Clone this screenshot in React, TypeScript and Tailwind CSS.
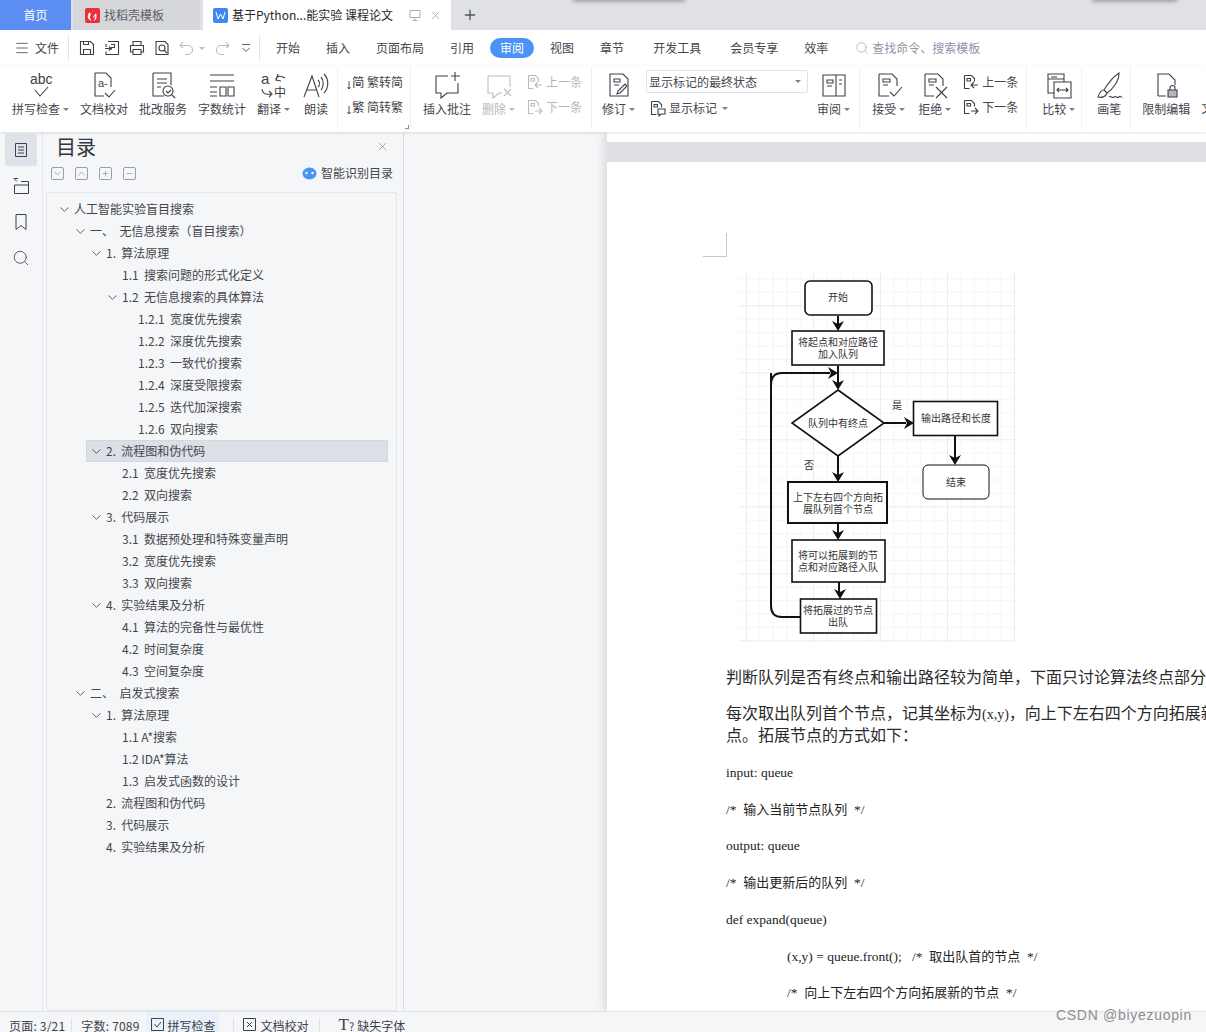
import type { ReactNode } from "react";
import { ChevronDown, ChevronUp, Menu, Minus, Plus, Search, X } from "lucide-react";

const cjk = "font-['Noto_Sans_CJK_SC','Noto_Sans',sans-serif]";

function Caret({ muted }: { muted?: boolean }) {
  return (
    <span
      className={`ml-[3px] inline-block h-0 w-0 border-x-[3px] border-t-[3px] border-x-transparent ${
        muted ? "border-t-[#b9bcc4]" : "border-t-[#7b7f88]"
      }`}
    />
  );
}

function Ico({ children, w = 30, muted }: { children: ReactNode; w?: number; muted?: boolean }) {
  return (
    <svg
      width={w}
      height={30}
      viewBox={`0 0 ${w} 30`}
      fill="none"
      stroke={muted ? "#b9bcc4" : "#3d4149"}
      strokeWidth="1.1"
      className="shrink-0"
    >
      {children}
    </svg>
  );
}

function Small({ children, muted }: { children: ReactNode; muted?: boolean }) {
  return (
    <svg
      width="18"
      height="18"
      viewBox="0 0 18 18"
      fill="none"
      stroke={muted ? "#b9bcc4" : "#3d4149"}
      strokeWidth="1.1"
      className="shrink-0"
    >
      {children}
    </svg>
  );
}

function Big({
  label,
  icon,
  caret,
  muted,
  className = "",
}: {
  label: string;
  icon: ReactNode;
  caret?: boolean;
  muted?: boolean;
  className?: string;
}) {
  return (
    <div className={`flex shrink-0 flex-col items-center ${className}`}>
      <div className="flex h-[35px] items-center">{icon}</div>
      <div className={`-mt-[2px] flex h-[18px] items-center whitespace-nowrap text-xs ${muted ? "text-[#b4b7bf]" : ""}`}>
        {label}
        {caret && <Caret muted={muted} />}
      </div>
    </div>
  );
}

function MiniRow({ icon, label, muted }: { icon: ReactNode; label: string; muted?: boolean }) {
  return (
    <div className={`flex h-[24px] items-center gap-[2px] whitespace-nowrap text-xs ${muted ? "text-[#b4b7bf]" : ""}`}>
      {icon}
      {label}
    </div>
  );
}

const Sep = ({ className = "" }: { className?: string }) => (
  <div className={`h-[62px] w-px shrink-0 self-start bg-[#eef0f3] ${className}`} />
);

const docMini = (
  <>
    <path d="M2.500 2.500h7l3 3v3M2.500 2.500v13h5" />
    <path d="M5 5.500h3.500v2.500H5z" />
  </>
);

function PrevIcon({ muted }: { muted?: boolean }) {
  return (
    <Small muted={muted}>
      {docMini}
      <path d="M16 12H9m3-3-3 3 3 3" />
    </Small>
  );
}

function NextIcon({ muted }: { muted?: boolean }) {
  return (
    <Small muted={muted}>
      {docMini}
      <path d="M9 13h7m-3-3 3 3-3 3" />
    </Small>
  );
}

function ConvertIcon({ ch }: { ch: string }) {
  return (
    <Small>
      <text x="5" y="13.500" fontSize="12.500" fill="#3d4149" stroke="none" fontFamily="Noto Sans CJK SC">
        {ch}
      </text>
      <path d="M2 8v8M0.500 14 2 16l1.500-2" strokeWidth="0.9" />
    </Small>
  );
}

function Ribbon() {
  return (
    <div className="relative z-10 flex h-[66px] shrink-0 items-start bg-white pl-[12px] pt-[1px] text-[#43464d] shadow-[0_1px_3px_rgba(0,0,0,0.12)]">
      <div className="flex gap-[11px]">
        <Big
          label="拼写检查"
          caret
          icon={
            <Ico>
              <text x="4" y="14" fontSize="14" fill="#3d4149" stroke="none" fontFamily="Liberation Sans">
                abc
              </text>
              <path d="m9 20 5 6 8-9" />
            </Ico>
          }
        />
        <Big
          label="文档校对"
          icon={
            <Ico>
              <path d="M6 3h11l5 5v9M6 3v23h9" />
              <text x="9" y="17" fontSize="11" fill="#3d4149" stroke="none" fontFamily="Liberation Sans">
                a-
              </text>
              <path d="m16 23 4 4 6-7" />
            </Ico>
          }
        />
        <Big
          label="批改服务"
          icon={
            <Ico>
              <path d="M5 3h18v12M5 3v23h11" />
              <path d="M9 9h10M9 13h10M9 17h4" />
              <circle cx="20" cy="21" r="5" />
              <path d="m18 21 2 2 3-3M24 25l3 3" />
            </Ico>
          }
        />
        <Big
          label="字数统计"
          icon={
            <Ico>
              <path d="M3 5h24M3 11h24" />
              <path d="M3 17h7M3 22h7M3 26h7" />
              <path d="M13 17h6v9h-6zM21 17h6v9h-6z" />
            </Ico>
          }
        />
        <Big
          label="翻译"
          caret
          className="w-[33px]"
          icon={
            <Ico>
              <text x="2" y="14" fontSize="15" fill="#3d4149" stroke="none" fontFamily="Liberation Sans">
                a
              </text>
              <text x="15" y="27" fontSize="12" fill="#3d4149" stroke="none" fontFamily="Noto Sans CJK SC">
                中
              </text>
              <path d="M17 10c0-4 4-5 9-2m-7-4-2 6 5 1" />
              <path d="M3 19c0 4 3 6 9 5m-2-3 3 3-3 3" />
            </Ico>
          }
        />
        <Big
          label="朗读"
          icon={
            <Ico>
              <path d="m3 27 8-21 7 21M6 20h10" />
              <path d="M17 10c2 2 2 5 0 7M20 7c3 3 3 10 0 13M23 4c5 5 5 14 0 19" />
            </Ico>
          }
        />
      </div>
      <Sep className="ml-[6px]" />
      <div className="ml-[9px] w-[58px] shrink-0 pt-[3px]">
        <MiniRow label="繁转简" icon={<ConvertIcon ch="简" />} />
        <div className="h-[1px]" />
        <MiniRow label="简转繁" icon={<ConvertIcon ch="繁" />} />
      </div>
      <div className="relative h-[62px] w-[3px] shrink-0">
        <div className="absolute bottom-0 left-0 h-[4px] w-[4px] border-b border-r border-[#8a8fa0]" />
      </div>
      <Sep className="ml-[2px]" />
      <Big
        label="插入批注"
        className="ml-[12px]"
        icon={
          <Ico>
            <path d="M16 6H4v17h5v5l6-5h11V13" />
            <path d="M23 2v9M19 6h9" />
          </Ico>
        }
      />
      <Big
        label="删除"
        caret
        muted
        className="ml-[11px]"
        icon={
          <Ico muted>
            <path d="M4 6h22v11M4 6v17h5v5l6-5h3" />
            <path d="m20 19 7 7m0-7-7 7" />
          </Ico>
        }
      />
      <div className="ml-[11px] w-[56px] shrink-0 pt-[3px]">
        <MiniRow muted label="上一条" icon={<PrevIcon muted />} />
        <div className="h-[1px]" />
        <MiniRow muted label="下一条" icon={<NextIcon muted />} />
      </div>
      <Sep className="ml-[9px]" />
      <Big
        label="修订"
        caret
        className="ml-[10px]"
        icon={
          <Ico>
            <path d="M6 4h13l5 5v17H6z" />
            <path d="M10 9h6v3h-6zM10 15h5" />
            <path d="m13 24 1-3 7-7 2 2-7 7z" />
          </Ico>
        }
      />
      <div className="ml-[11px] w-[162px] shrink-0 pt-[3px]">
        <div className="flex h-[23px] items-center justify-between rounded-[2px] border border-[#dfe1e6] pl-[2px] pr-[6px] text-xs">
          显示标记的最终状态
          <Caret />
        </div>
        <div className="mt-[3px] flex h-[24px] items-center gap-[2px] pl-[3px] text-xs">
          <Small>
            {docMini}
            <path d="M9 10h7v5h-4l-2 2v-2H9z" />
          </Small>
          显示标记
          <Caret />
        </div>
      </div>
      <Big
        label="审阅"
        caret
        className="ml-[9px]"
        icon={
          <Ico>
            <path d="M4 5h22v21H4zM17 5v21" />
            <path d="M8 10h6v3H8zM8 16h5M20 10h3M20 14h3" />
          </Ico>
        }
      />
      <Sep className="ml-[9px]" />
      <Big
        label="接受"
        caret
        className="ml-[12px]"
        icon={
          <Ico>
            <path d="M5 4h13l5 5v7M5 4v22h10" />
            <path d="M9 9h7v3H9zM9 15h5" />
            <path d="m16 22 4 4 8-9" />
          </Ico>
        }
      />
      <Big
        label="拒绝"
        caret
        className="ml-[13px]"
        icon={
          <Ico>
            <path d="M5 4h13l5 5v7M5 4v22h9" />
            <path d="M9 9h7v3H9zM9 15h5" />
            <path d="m16 17 11 11m0-11L16 28" />
          </Ico>
        }
      />
      <div className="ml-[11px] w-[56px] shrink-0 pt-[3px]">
        <MiniRow label="上一条" icon={<PrevIcon />} />
        <div className="h-[1px]" />
        <MiniRow label="下一条" icon={<NextIcon />} />
      </div>
      <Sep className="ml-[8px]" />
      <Big
        label="比较"
        caret
        className="ml-[15px]"
        icon={
          <Ico>
            <path d="M4 4h16v5H4zM4 4v19h6M20 9v3" />
            <path d="M10 12h17v16H10z" />
            <path d="M7 7h6M13 20h11m-9-2-2 2 2 2m7-4 2 2-2 2" />
          </Ico>
        }
      />
      <Sep className="ml-[6px]" />
      <Big
        label="画笔"
        className="ml-[12px]"
        icon={
          <Ico>
            <path d="M25 3c-6 4-12 12-15 17l3 3c6-4 12-12 12-20z" />
            <path d="M10 20c-4 0-5 4-6 7 3 1 8 0 9-4" />
            <path d="M15 27c2-2 3 2 5 0s3 2 5 0 2 1 3 0" />
          </Ico>
        }
      />
      <Sep className="ml-[6px]" />
      <Big
        label="限制编辑"
        className="ml-[11px]"
        icon={
          <Ico>
            <path d="M7 26V4h11l6 6v5M7 26h8" />
            <path d="M17 20h9v7h-9z" fill="#b5b8c0" stroke="#3d4149" />
            <path d="M19 20v-2a2.500 2.500 0 0 1 5 0v2" />
          </Ico>
        }
      />
      <div className="ml-[11px] mt-[33px] text-xs">文</div>
    </div>
  );
}

function Tabs() {
  return (
    <div className="relative flex h-[30px] shrink-0 bg-[#e0e1e5]">
      <div className="flex w-[71px] items-center justify-center bg-[#5c8df2] pb-[1px] text-xs text-white">首页</div>
      <div className="ml-[2px] flex w-[127px] items-center gap-[4px] bg-[#d6d7db] pl-[12px] text-xs text-[#5d6068]">
        <span className="flex h-[15px] w-[15px] items-center justify-center rounded-[2px] bg-[#ee2d3b]">
          <svg width="11" height="12" viewBox="0 0 11 12" fill="#fff">
            <path d="M6 0c1 3-3 5-3 8 0 2 1 3 2 4-3-1-5-3-4-6 0-1 1-2 2-3 0 1 0 2 1 2 1-1 2-3 2-5zM9 4c1 3 1 6-2 8 0-2 2-3 1-5-1 1-1 2-2 2 0-2 2-3 3-5z" />
          </svg>
        </span>
        找稻壳模板
      </div>
      <div className="ml-[3px] flex w-[248px] items-center bg-white pl-[10px] text-xs text-[#26282d]">
        <span className="mr-[4px] flex h-[15px] w-[15px] items-center justify-center rounded-[2px] bg-[#3f88f2]">
          <svg width="11" height="9" viewBox="0 0 11 9" fill="none" stroke="#fff" strokeWidth="1">
            <path d="m1 1 2 7 2.500-5 2.500 5 2-7" />
          </svg>
        </span>
        <span className="whitespace-nowrap">基于Python...能实验 课程论文</span>
        <svg width="14" height="14" viewBox="0 0 14 14" fill="none" stroke="#a9adb6" className="ml-[15px]">
          <path d="M2 2.500h10v7H2zM7 9.500v2.500M4.500 12.500h5" />
        </svg>
        <X size={13} strokeWidth={1.2} className="ml-[7px] text-[#8d919a]" />
      </div>
      <Plus size={16} strokeWidth={2} className="ml-[11px] self-center text-[#4f5562]" />
      {/* dark bleed along the top edge of the capture */}
      <div className="absolute left-[573px] top-[-2px] h-[3px] w-[112px] bg-[#777] blur-[2px]" />
      <div className="absolute left-[1092px] top-[-2px] h-[3px] w-[85px] bg-[#777] blur-[2px]" />
    </div>
  );
}

function MenuBar() {
  return (
    <div className="flex h-[36px] shrink-0 items-center bg-white text-xs text-[#43464d]">
      <Menu size={16} strokeWidth={1.2} className="ml-[14px] text-[#3d4149]" />
      <span className="ml-[5px]">文件</span>
      <div className="ml-[9px] h-[26px] w-px bg-[#e3e5e9]" />
      <div className="ml-[9px] flex items-center gap-[7px]">
        <Small>
          <path d="M2.500 2.500h10l3 3v10h-13zM5.500 15.500v-5h7v5M5.500 2.500v3h5v-3" />
        </Small>
        <Small>
          <path d="M5 2.500h10.500v13H3v-3M3 8V5" />
          <path d="M8 5.500h3.500v3H8.500v2M2 9.500h6M6 7.500l2 2-2 2" />
        </Small>
        <Small>
          <path d="M5 6V2.500h8V6M5 13H2.500V6.500h13V13H13M5 10.500h8v5H5z" />
        </Small>
        <Small>
          <path d="M3 2.500h9l3 3v10H3z" />
          <circle cx="9" cy="9" r="3" />
          <path d="m11 11 3 3" />
        </Small>
      </div>
      <div className="ml-[7px] flex items-center">
        <Small muted>
          <path d="M5 3 2 6.500 5 9M2 6.500h8a4.500 4.500 0 0 1 0 9H7" />
        </Small>
        <Caret muted />
        <span className="ml-[8px]">
          <Small muted>
            <path d="M13 3l3 3.500L13 9M16 6.500H8a4.500 4.500 0 0 0 0 9h3" />
          </Small>
        </span>
        <span className="ml-[9px]">
          <svg width="12" height="12" viewBox="0 0 12 12" fill="none" stroke="#5d6068">
            <path d="M2 2.500h8M2.500 6 6 9.500 9.500 6" />
          </svg>
        </span>
      </div>
      <div className="ml-[7px] h-[26px] w-px bg-[#e3e5e9]" />
      <div className="ml-[16px] flex items-center gap-[26px] whitespace-nowrap">
        <span>开始</span>
        <span>插入</span>
        <span>页面布局</span>
        <span>引用</span>
        <span className="-mx-[10px] rounded-full bg-[#4c94f4] px-[10px] py-[2px] leading-[16px] text-white">审阅</span>
        <span>视图</span>
        <span>章节</span>
        <span className="ml-[3px]">开发工具</span>
        <span className="ml-[3px]">会员专享</span>
        <span>效率</span>
      </div>
      <Search size={14} strokeWidth={1.3} className="ml-[27px] text-[#a7acb8]" />
      <span className="ml-[3px] whitespace-nowrap text-[#8d94a6]">查找命令、搜索模板</span>
    </div>
  );
}

type Node = { t: string; l: 0 | 1 | 2 | 3 | 4; c?: boolean; hl?: boolean };

const toc: Node[] = [
  { t: "人工智能实验盲目搜索", l: 0, c: true },
  { t: "一、  无信息搜索（盲目搜索）", l: 1, c: true },
  { t: "1.  算法原理", l: 2, c: true },
  { t: "1.1  搜索问题的形式化定义", l: 3 },
  { t: "1.2  无信息搜索的具体算法", l: 3, c: true },
  { t: "1.2.1  宽度优先搜索", l: 4 },
  { t: "1.2.2  深度优先搜索", l: 4 },
  { t: "1.2.3  一致代价搜索", l: 4 },
  { t: "1.2.4  深度受限搜索", l: 4 },
  { t: "1.2.5  迭代加深搜索", l: 4 },
  { t: "1.2.6  双向搜索", l: 4 },
  { t: "2.  流程图和伪代码", l: 2, c: true, hl: true },
  { t: "2.1  宽度优先搜索", l: 3 },
  { t: "2.2  双向搜索", l: 3 },
  { t: "3.  代码展示", l: 2, c: true },
  { t: "3.1  数据预处理和特殊变量声明", l: 3 },
  { t: "3.2  宽度优先搜索", l: 3 },
  { t: "3.3  双向搜索", l: 3 },
  { t: "4.  实验结果及分析", l: 2, c: true },
  { t: "4.1  算法的完备性与最优性", l: 3 },
  { t: "4.2  时间复杂度", l: 3 },
  { t: "4.3  空间复杂度", l: 3 },
  { t: "二、  启发式搜索", l: 1, c: true },
  { t: "1.  算法原理", l: 2, c: true },
  { t: "1.1 A*搜索", l: 3 },
  { t: "1.2 IDA*算法", l: 3 },
  { t: "1.3  启发式函数的设计", l: 3 },
  { t: "2.  流程图和伪代码", l: 2 },
  { t: "3.  代码展示", l: 2 },
  { t: "4.  实验结果及分析", l: 2 },
];

const indent = ["ml-[7px]", "ml-[23px]", "ml-[39px]", "ml-[55px]", "ml-[71px]"];

function TocBtn({ children }: { children: ReactNode }) {
  return (
    <span className="flex h-[13px] w-[13px] items-center justify-center rounded-[2px] border border-[#9a9ea8] text-[#60646c]">
      {children}
    </span>
  );
}

function Sidebar() {
  return (
    <div className="flex w-[404px] shrink-0 border-r border-[#dcdee3] bg-[#f5f6f8]">
      <div className="flex w-[43px] shrink-0 flex-col items-center border-r border-[#e4e6ea] pt-[2px] text-[#4a4e57]">
        <div className="flex h-[32px] w-[32px] items-center justify-center rounded-[2px] bg-[#dfe2e9]">
          <svg width="16" height="16" viewBox="0 0 16 16" fill="none" stroke="#3d4149">
            <path d="M2.500 1.500h11v13h-11zM5 5h6M5 8h6M5 11h6" />
          </svg>
        </div>
        <svg width="18" height="18" viewBox="0 0 18 18" fill="none" stroke="#3d4149" className="mt-[11px]">
          <path d="M2 1.500h4M2 1.500l3 3M9 4.500h7.500v12h-14V8M2.500 8h14" />
        </svg>
        <svg width="18" height="18" viewBox="0 0 18 18" fill="none" stroke="#3d4149" className="mt-[18px]">
          <path d="M4 1.500h10v15l-5-4-5 4z" />
        </svg>
        <Search size={18} strokeWidth={1.2} className="mt-[18px]" />
      </div>
      <div className="flex min-w-0 flex-1 flex-col pl-[3px] pr-[6px]">
        <div className="flex items-start justify-between pl-[10px] pr-[8px] pt-[3px]">
          <span className="text-[20px] leading-[24px] text-[#33363c]">目录</span>
          <X size={13} strokeWidth={1} className="mt-[5px] text-[#60646c]" />
        </div>
        <div className="mt-[4px] flex h-[20px] items-center pl-[5px] pr-[4px]">
          <div className="flex gap-[11px]">
            <TocBtn>
              <ChevronDown size={11} strokeWidth={1.2} />
            </TocBtn>
            <TocBtn>
              <ChevronUp size={11} strokeWidth={1.2} />
            </TocBtn>
            <TocBtn>
              <Plus size={9} strokeWidth={1.2} />
            </TocBtn>
            <TocBtn>
              <Minus size={9} strokeWidth={1.2} />
            </TocBtn>
          </div>
          <div className="ml-auto flex items-center gap-[4px] text-xs text-[#43464d]">
            <svg width="15" height="13" viewBox="0 0 15 13">
              <ellipse cx="7.500" cy="6.500" rx="7" ry="6" fill="#4c94f4" />
              <circle cx="4.500" cy="6" r="1.200" fill="#fff" />
              <circle cx="10.500" cy="6" r="1.200" fill="#fff" />
            </svg>
            智能识别目录
          </div>
        </div>
        <div className="mt-[9px] flex-1 overflow-hidden rounded-[2px] border border-[#e4e6ea] pt-[5px] text-xs text-[#43464d]">
          {toc.map((n, i) => (
            <div
              key={i}
              className={`flex h-[22px] items-center whitespace-pre ${indent[n.l]} mr-[8px] ${
                n.hl ? "bg-[#dbdfe6] shadow-[inset_0_0_0_1px_#d3d7df]" : ""
              }`}
            >
              <span className="flex w-[20px] shrink-0 justify-center">
                {n.c && <ChevronDown size={15} strokeWidth={1.3} className="text-[#3d4149]" />}
              </span>
              {n.t}
            </div>
          ))}
        </div>
      </div>
    </div>
  );
}

function Flow() {
  const v = Array.from({ length: 21 }, (_, i) => 746.5 + i * 13.4);
  const h = Array.from({ length: 28 }, (_, i) => 279 + i * 13.4);
  const txt = (x: number, y: number, s: string) => (
    <text x={x} y={y} fontSize="10" textAnchor="middle" fill="#333" stroke="none" fontFamily="Noto Sans CJK SC">
      {s}
    </text>
  );
  return (
    <svg width="277" height="372" viewBox="739 271 277 372" fill="none" className="block">
      {v.map((x, i) => (
        <path key={i} d={`M${x} 271V642`} stroke={i % 5 === 0 ? "#ebebeb" : "#f5f5f5"} />
      ))}
      {h.map((y, i) => (
        <path key={i} d={`M739 ${y}H1015`} stroke={i % 5 === 2 ? "#ebebeb" : "#f5f5f5"} />
      ))}
      <g stroke="#111" strokeWidth="1.600" fill="#fff">
        <rect x="805" y="281" width="67" height="34" rx="5" />
        <rect x="792" y="331" width="92" height="34" />
        <path d="M838 390 884 423 838 456 792 423Z" />
        <rect x="913.500" y="401.500" width="84" height="34" />
        <rect x="923" y="465" width="66" height="34" rx="5" strokeWidth="1" />
        <rect x="788" y="482" width="99" height="41" strokeWidth="2" />
        <rect x="792" y="540" width="93" height="42" />
        <rect x="800.500" y="599" width="76" height="34" />
      </g>
      <g stroke="#111" strokeWidth="2">
        <path d="M838 316V326M838 366V385M771 373V606Q771 617 782 617H800M771 385Q771 373 782 373H830" />
        <path d="M884 423H906M955 436V458M838 456V476M838 524V534M839 582V593" />
      </g>
      <g fill="#111">
        <path d="M838 331 832 321 838 324 844 321ZM838 390 832 380 838 383 844 380ZM838 373 828 367 831 373 828 379Z" />
        <path d="M914 423 904 417 907 423 904 429ZM955 465 949 455 955 458 961 455ZM838 482 832 472 838 475 844 472Z" />
        <path d="M838 540 832 530 838 533 844 530ZM840 599 834 589 840 592 846 589Z" />
      </g>
      {txt(838, 301, "开始")}
      {txt(838, 346, "将起点和对应路径")}
      {txt(838, 358, "加入队列")}
      {txt(838, 427, "队列中有终点")}
      {txt(956, 422, "输出路径和长度")}
      {txt(956, 486, "结束")}
      {txt(897, 409, "是")}
      {txt(809, 469, "否")}
      {txt(838, 501, "上下左右四个方向拓")}
      {txt(838, 513, "展队列首个节点")}
      {txt(838, 559, "将可以拓展到的节")}
      {txt(838, 571, "点和对应路径入队")}
      {txt(838, 614, "将拓展过的节点")}
      {txt(838, 626, "出队")}
    </svg>
  );
}

function Code({ children, indented, nudge }: { children: ReactNode; indented?: boolean; nudge?: "a" | "b" }) {
  return (
    <div
      className={`h-[36.600px] whitespace-pre font-['Liberation_Serif','Noto_Sans_CJK_SC',serif] text-[13.500px] leading-[20px] text-[#222] ${
        indented ? "pl-[61px]" : ""
      } ${nudge === "a" ? "pt-[1px]" : nudge === "b" ? "pt-[2px]" : ""}`}
    >
      {children}
    </div>
  );
}

const Zh = ({ children }: { children: string }) => <span className={`${cjk} text-[13px]`}>{children}</span>;

function Page() {
  return (
    <div className="flex min-w-0 flex-1 overflow-hidden bg-[#f5f6f8] pl-[203px]">
      <div className="relative flex-1 bg-white shadow-[-4px_0_8px_rgba(0,0,0,0.1)]">
        <div className="h-[10px] bg-white" />
        <div className="h-[20px] bg-[#dedfe2]" />
        <div className="absolute left-[96px] top-[101px] h-[24px] w-[24px] border-b border-r border-[#c6c8cc]" />
        <div className="overflow-hidden pl-[119px] pt-[109px]">
          <div className="pl-[13px]">
            <Flow />
          </div>
          <div className={`mt-[22px] whitespace-nowrap text-base leading-[22px] text-[#2a2a2a] ${cjk}`}>
            判断队列是否有终点和输出路径较为简单，下面只讨论算法终点部分的实现
          </div>
          <div className={`mt-[15px] h-[22px] whitespace-nowrap text-base leading-[21px] text-[#2a2a2a] ${cjk}`}>
            每次取出队列首个节点，记其坐标为<span className="font-['Liberation_Serif',serif] text-sm">(x,y)</span>
            ，向上下左右四个方向拓展新的节
          </div>
          <div className={`mb-[17px] whitespace-nowrap text-base leading-[21px] text-[#2a2a2a] ${cjk}`}>
            点。拓展节点的方式如下：
          </div>
          <Code nudge="a">input: queue</Code>
          <Code>
            /*  <Zh>输入当前节点队列</Zh>  */
          </Code>
          <Code nudge="a">output: queue</Code>
          <Code>
            /*  <Zh>输出更新后的队列</Zh>  */
          </Code>
          <Code nudge="b">def expand(queue)</Code>
          <Code indented nudge="a">
            (x,y) = queue.front();   /*  <Zh>取出队首的节点</Zh>  */
          </Code>
          <Code indented>
            /*  <Zh>向上下左右四个方向拓展新的节点</Zh>  */
          </Code>
        </div>
      </div>
    </div>
  );
}

function StatusBar() {
  return (
    <div className="flex h-[21px] shrink-0 items-start overflow-hidden border-t border-[#e1e3e7] bg-[#f5f6f8] pl-[9px] text-xs leading-[16px] text-[#3d4149]">
      <span className="mt-[6px] tracking-[0.2px]">页面: 3/21</span>
      <div className="ml-[6px] mt-[6px] h-[14px] w-px bg-[#dfe1e6]" />
      <span className="ml-[9px] mt-[6px] tracking-[0.2px]">字数: 7089</span>
      <div className="ml-[6px] flex h-[21px] items-start gap-[3px] bg-[#e9f1fb] pl-[4px] pr-[3px] pt-[5px]">
        <svg width="15" height="15" viewBox="0 0 15 15" fill="none" stroke="#3d4149">
          <path d="M1.500 1.500h12v12h-12zM4.500 7l2.500 3 4-5" />
        </svg>
        <span className="mt-[1px]">拼写检查</span>
      </div>
      <span className="mt-[11px]">
        <Caret />
      </span>
      <div className="ml-[5px] mt-[6px] h-[14px] w-px bg-[#dfe1e6]" />
      <svg width="15" height="15" viewBox="0 0 15 15" fill="none" stroke="#3d4149" className="ml-[8px] mt-[5px]">
        <path d="M1.500 1.500h12v12h-12zM5 5l5 5M10 5l-5 5" />
      </svg>
      <span className="ml-[4px] mt-[6px]">文档校对</span>
      <div className="ml-[10px] mt-[6px] h-[14px] w-px bg-[#dfe1e6]" />
      <span className="ml-[19px] mt-[4px] font-['Liberation_Serif',serif] text-[17px] leading-[18px]">T</span>
      <span className="mt-[6px] text-[11px]">?</span>
      <span className="ml-[3px] mt-[6px]">缺失字体</span>
    </div>
  );
}

export default function App() {
  return (
    <div className={`relative flex h-[1032px] w-[1206px] flex-col overflow-hidden bg-white ${cjk}`}>
      <Tabs />
      <MenuBar />
      <Ribbon />
      <div className="flex min-h-0 flex-1">
        <Sidebar />
        <Page />
      </div>
      <StatusBar />
      <div className="absolute left-[1056px] top-[1005px] font-['Liberation_Sans',sans-serif] text-sm tracking-[0.7px] text-[#8e8e8e]">
        CSDN @biyezuopin
      </div>
    </div>
  );
}
